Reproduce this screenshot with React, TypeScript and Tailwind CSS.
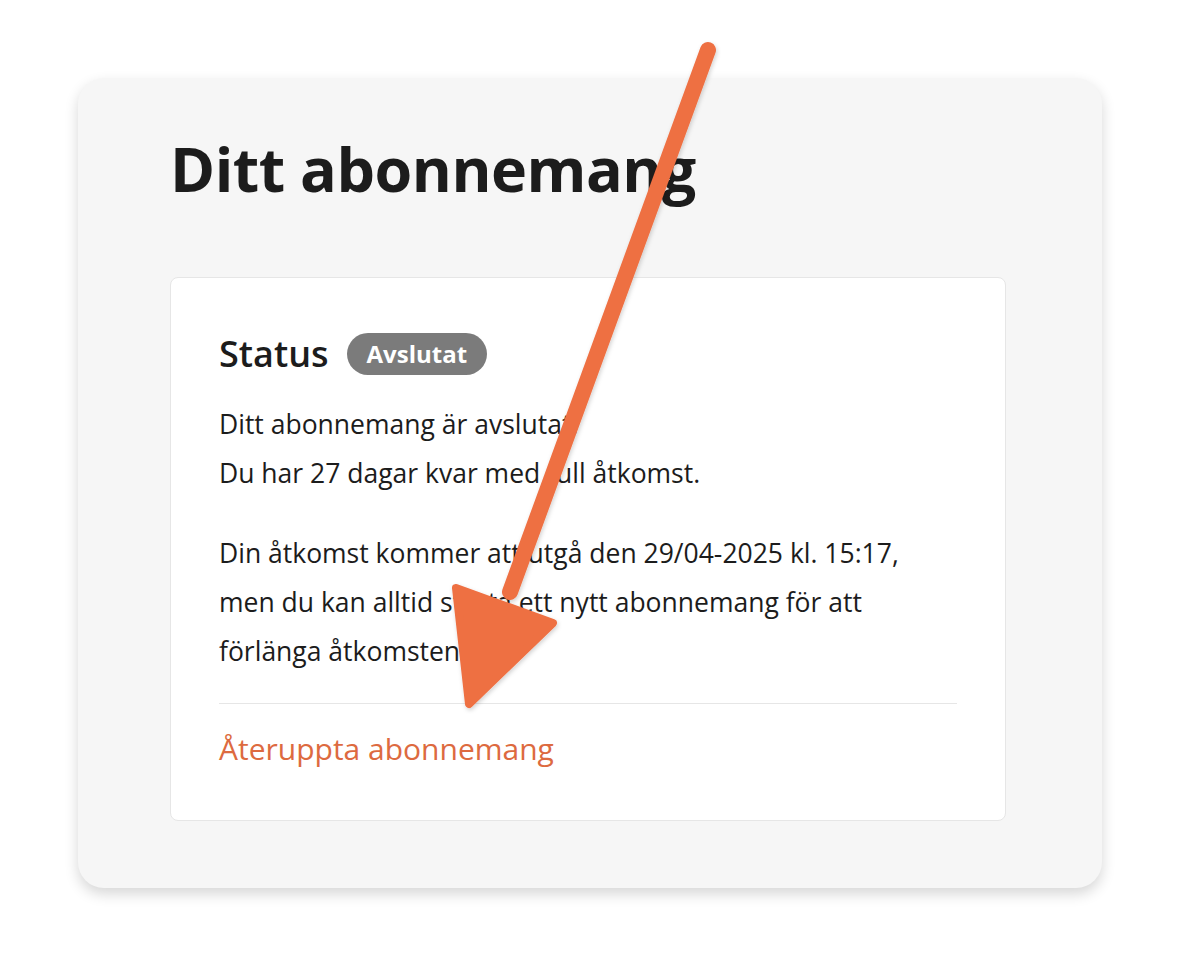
export default function App() {
  return (
    <div
      className="relative min-h-[966px] bg-white pt-[78px] pl-[78px]"
      style={{ fontFamily: '"Open Sans", "Noto Sans", sans-serif' }}
    >
      <div className="w-[1024px] rounded-[26px] bg-[#f6f6f6] pl-[92px] pr-[96px] pt-[50px] pb-[67px] shadow-[0_6px_14px_rgba(0,0,0,0.16)]">
        <h1 className="text-[61px] font-bold leading-[82px] tracking-[-0.5px] text-[#1c1c1c]">
          Ditt abonnemang
        </h1>
        <div className="mt-[67px] rounded-[8px] border border-[#e6e6e6] bg-white px-[48px] pt-[54px] pb-[48px]">
          <div className="flex items-center gap-[18px]">
            <h2 className="text-[36px] font-semibold leading-[44px] text-[#1c1c1c]">Status</h2>
            <span className="rounded-full bg-[#7b7b7b] px-[20px] py-[3px] text-[24px] font-bold leading-[36px] text-white">
              Avslutat
            </span>
          </div>
          <div className="mt-[24px] text-[26.5px] leading-[49px] text-[#1c1c1c]">
            <p>
              Ditt abonnemang är avslutat.
              <br />
              Du har 27 dagar kvar med full åtkomst.
            </p>
            <p className="mt-[31px]">
              Din åtkomst kommer att utgå den 29/04-2025 kl. 15:17,
              <br />
              men du kan alltid starta ett nytt abonnemang för att
              <br />
              förlänga åtkomsten.
            </p>
          </div>
          <div className="mt-[27px] h-px bg-[#e6e6e6]" />
          <a className="mt-[22px] block text-[30px] leading-[46px] text-[#dd6a40]">
            Återuppta abonnemang
          </a>
        </div>
      </div>
      <svg
        className="pointer-events-none absolute left-0 top-0"
        width="1180"
        height="966"
        viewBox="0 0 1180 966"
      >
        <defs>
          <filter id="sh" x="-20%" y="-20%" width="140%" height="140%">
            <feDropShadow dx="1" dy="2" stdDeviation="2" floodColor="#000" floodOpacity="0.18" />
          </filter>
        </defs>
        <g filter="url(#sh)" fill="#ee7043" stroke="#ee7043" strokeLinejoin="round" strokeLinecap="round">
          <line x1="708" y1="50" x2="510" y2="592" strokeWidth="16" />
          <polygon points="456,588 553,623 469,704" strokeWidth="8" />
        </g>
      </svg>
    </div>
  );
}
